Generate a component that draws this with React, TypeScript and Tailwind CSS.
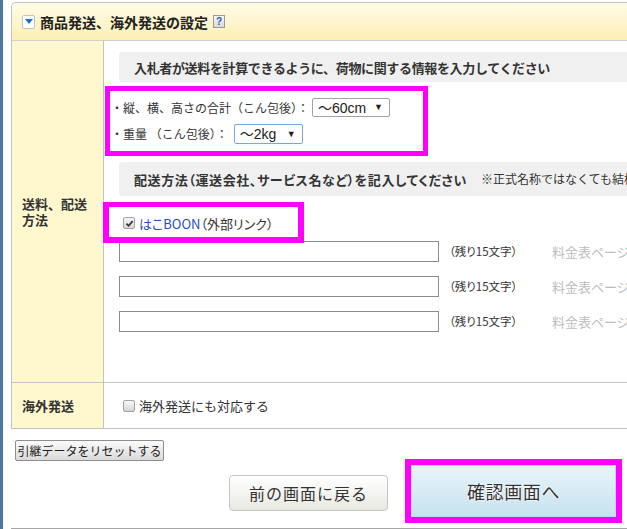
import type { ReactNode } from "react"

function CheckBox({ checked }: { checked?: boolean }) {
  return (
    <span className="flex size-[12px] shrink-0 items-center justify-center rounded-[2px] border border-[#a3a3a3] bg-linear-to-b from-[#f7f7f7] to-[#d6d6d6]">
      {checked && (
        <svg viewBox="0 0 10 10" className="size-[9px]">
          <path d="M1.6 5.2 L4 7.5 L8.5 2.3" fill="none" stroke="#333" strokeWidth="1.9" />
        </svg>
      )}
    </span>
  )
}

function FakeSelect({ value, className }: { value: string; className: string }) {
  return (
    <span
      className={`flex items-center justify-between rounded-[2px] border bg-white pl-[5px] pr-[6px] text-[14px] leading-none text-[#222] [font-family:'Liberation_Sans','Noto_Sans_CJK_JP',sans-serif] ${className}`}
    >
      {value}
      <span className="text-[9px]">▼</span>
    </span>
  )
}

function GrayBar({ children }: { children: ReactNode }) {
  return (
    <div className="flex h-[30px] items-center rounded-[4px] bg-[#f0f0f0] pl-[15px] text-[13px] font-bold leading-none tracking-[-0.35px] whitespace-nowrap">
      {children}
    </div>
  )
}

export default function App() {
  return (
    <div className="h-[529px] w-[627px] overflow-hidden bg-white text-[#333] [font-family:'Noto_Sans_CJK_JP',sans-serif]">
      <div className="flex h-full">
        <div className="w-[3px] shrink-0 bg-[#4b77a3]" />
        <div className="ml-[8px] w-[760px] shrink-0 pt-[2px]">
          <section className="rounded-tl-[5px] border-l border-t border-[#c3c3c3]">
            <header className="flex h-[38px] items-center rounded-tl-[5px] border-b border-[#d0d0d0] bg-linear-to-b from-[#fffbe8] to-[#fcefb2] pl-[10px]">
              <span className="flex h-[14px] w-[13px] items-center justify-center rounded-[2px] border border-[#c4c4c4] bg-white">
                <svg viewBox="0 0 8 5" className="h-[5px] w-[8px]">
                  <polygon points="0,0 8,0 4,5" fill="#1e6fd0" />
                </svg>
              </span>
              <span className="ml-[5px] text-[14px] font-bold leading-none text-[#222]">商品発送、海外発送の設定</span>
              <span className="ml-[5px] flex h-[13px] w-[12px] items-center justify-center border border-[#9a9a9a] bg-linear-to-b from-[#fafafa] to-[#d9d9d9] text-[10px] font-bold leading-none text-[#2458c8] [font-family:'Liberation_Sans',sans-serif]">
                ?
              </span>
            </header>

            <div className="flex border-b border-[#c3c3c3]">
              <div className="flex w-[92px] shrink-0 flex-col justify-center border-r border-[#c3c3c3] bg-[#fff8cf] pl-[10px] text-[13px] font-bold leading-[16px]">
                <span>送料、配送</span>
                <span>方法</span>
              </div>
              <div className="relative flex-1 pb-[50px] pl-[15px] pt-[11px]">
                <GrayBar>入札者が送料を計算できるように、荷物に関する情報を入力してください</GrayBar>

                <div className="-ml-[14px] mt-[4px] flex w-[323px] flex-col gap-[7px] border-[5px] border-[#ff00ff] py-[7px] pl-[1px] text-[12px] leading-none">
                  <div className="flex h-[19px] items-center">
                    <span>・縦、横、高さの合計（こん包後）：</span>
                    <FakeSelect value="～60cm" className="ml-[3px] h-[19px] w-[78px] border-[#a3a3a3]" />
                  </div>
                  <div className="flex h-[20px] items-center">
                    <span>・重量 （こん包後）：</span>
                    <FakeSelect value="～2kg" className="ml-[6px] h-[20px] w-[69px] border-[#7ba6de]" />
                  </div>
                </div>

                <div className="mt-[6px] flex h-[34px] items-center rounded-[4px] bg-[#f0f0f0] pl-[15px] leading-none whitespace-nowrap">
                  <span className="text-[13px] font-bold tracking-[0.6px] [font-feature-settings:'palt']">
                    配送方法（運送会社、サービス名など）を記入してください
                  </span>
                  <span className="ml-[14px] text-[12px]">※正式名称ではなくても結構です</span>
                </div>

                <div className="mt-[21px] flex h-[12px] items-center gap-[4px] pl-[4px] text-[13px] leading-none">
                  <CheckBox checked />
                  <span className="[font-feature-settings:'palt']">
                    <span className="text-[#1f4fc0]">はこBOON</span>（外部リンク）
                  </span>
                </div>

                <div className="mt-[12px] flex flex-col gap-[14px]">
                  {[0, 1, 2].map((i) => (
                    <div key={i} className="flex items-center">
                      <div className="h-[21px] w-[320px] border border-[#8c8c8c] bg-white" />
                      <span className="ml-[10px] w-[103px] text-[11.5px] leading-none [font-feature-settings:'palt']">
                        （残り15文字）
                      </span>
                      <span className="text-[13px] leading-none whitespace-nowrap text-[#bdbdbd]">料金表ページのURL</span>
                    </div>
                  ))}
                </div>

                <div className="absolute left-[-1px] top-[161px] h-[41px] w-[201px] border-[6px] border-t-[5px] border-[#ff00ff]" />
              </div>
            </div>

            <div className="flex h-[46px] border-b border-[#c3c3c3]">
              <div className="flex w-[92px] shrink-0 items-center border-r border-[#c3c3c3] bg-[#fff8cf] pl-[10px] text-[13px] font-bold leading-none">
                海外発送
              </div>
              <div className="flex items-center gap-[4px] pl-[19px] text-[13px] leading-none">
                <CheckBox />
                <span>海外発送にも対応する</span>
              </div>
            </div>
          </section>

          <button className="ml-[4px] mt-[11px] flex h-[21px] w-[149px] items-center justify-center rounded-[2px] border border-[#8e8e8e] bg-linear-to-b from-[#fbfbfb] to-[#dadada] text-[12px] leading-none text-[#222]">
            引継データをリセットする
          </button>

          <div className="-mt-[2px] flex items-start">
            <button className="ml-[218px] mt-[16px] flex h-[36px] w-[159px] items-center justify-center rounded-[4px] border border-[#c6c6c6] bg-linear-to-b from-[#ffffff] to-[#e9e9e2] text-[16px] leading-none tracking-[1px] text-[#333]">
              前の画面に戻る
            </button>
            <div className="ml-[17px] h-[64px] w-[217px] border-[6px] border-[#ff00ff]">
              <button className="flex h-full w-full items-center justify-center border border-[#bcd9e7] bg-linear-to-b from-[#e6f5fa] to-[#c7e2ee] text-[18px] leading-none tracking-[0.6px] text-[#333] [text-shadow:0_0_2px_#fff,0_0_2px_#fff,0_0_1px_#fff]">
                確認画面へ
              </button>
            </div>
          </div>

          <div className="mt-[5px] border-t border-[#a6a6a6]" />
        </div>
      </div>
    </div>
  )
}
